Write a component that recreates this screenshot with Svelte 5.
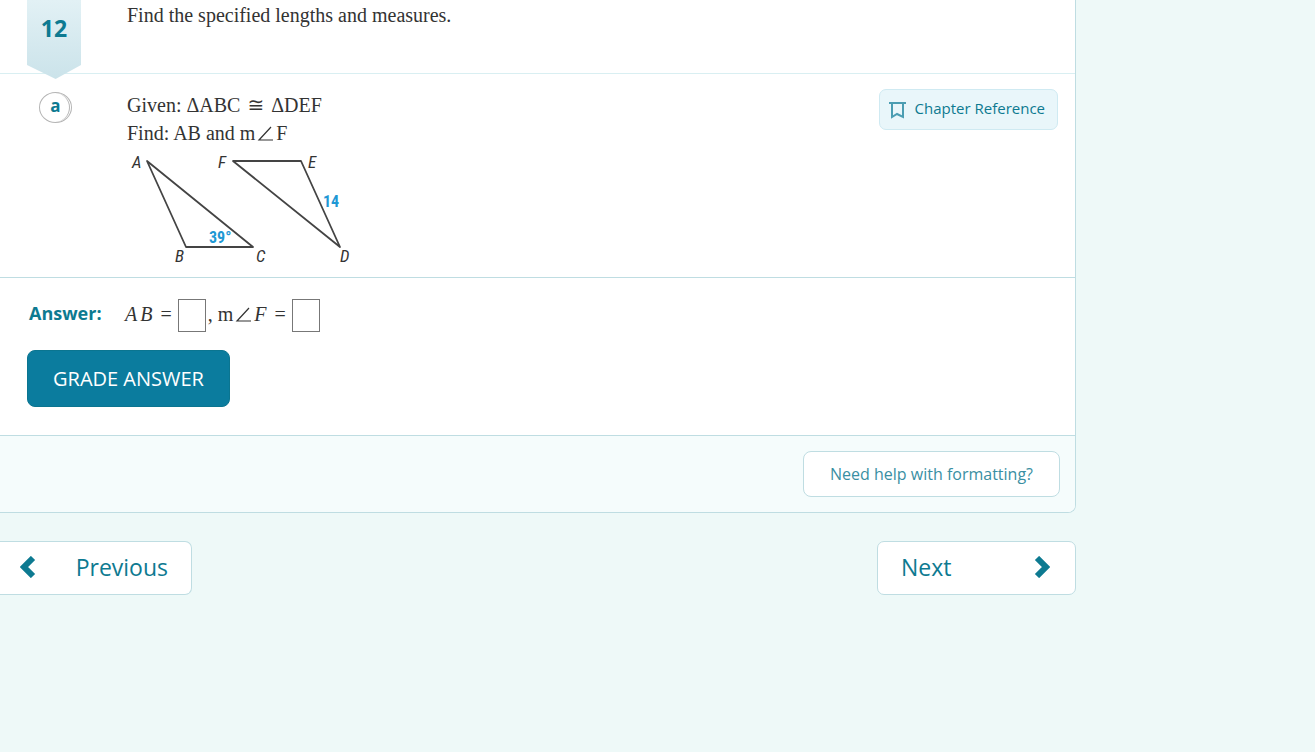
<script lang="ts">
  let ab = $state("");
  let mf = $state("");

  // Vertices of both triangles, in the diagram's own coordinates.
  const triangles = ["20,14 59,100 126,100", "106,14 174,14 213,100"];

  const labels = [
    { text: "A", x: 5, y: 21 },
    { text: "B", x: 48, y: 115 },
    { text: "C", x: 129, y: 115 },
    { text: "F", x: 91, y: 21 },
    { text: "E", x: 181, y: 21 },
    { text: "D", x: 213, y: 115 },
  ];

  const measures = [
    { text: "39°", x: 82, y: 96 },
    { text: "14", x: 196, y: 60 },
  ];
</script>

{#snippet angle()}
  <svg class="angle" viewBox="0 0 17 15" width="17" height="15" role="img" aria-label="angle">
    <path d="M14 1 L2 14 H16" />
  </svg>
{/snippet}

<main>
  <section class="card">
    <header class="row head">
      <div class="ribbon">12</div>
      <p class="prose">Find the specified lengths and measures.</p>
    </header>

    <div class="row part">
      <div class="letter"><span>a</span></div>
      <div class="prose">
        <p>Given: ΔABC <span class="cong">≅</span> ΔDEF</p>
        <p>Find: AB and m{@render angle()}F</p>
        <svg class="diagram" viewBox="0 0 230 125" width="230" height="125" role="img" aria-label="Triangles ABC and DEF">
          {#each triangles as points}
            <polygon {points} />
          {/each}
          {#each labels as l}
            <text class="vertex" x={l.x} y={l.y}>{l.text}</text>
          {/each}
          {#each measures as m}
            <text class="measure" x={m.x} y={m.y}>{m.text}</text>
          {/each}
        </svg>
      </div>
      <button class="chapter">
        <svg viewBox="0 0 17 18" width="17" height="18">
          <path d="M0 2 H17 M3 2 V16 L8 13 L14 16 V2" />
        </svg>
        Chapter Reference
      </button>
    </div>

    <form class="answer" onsubmit={(e) => e.preventDefault()}>
      <div class="fields">
        <strong>Answer:</strong>
        <label for="ab"><i>A</i><i class="factor">B</i><span class="eq">=</span></label>
        <input id="ab" bind:value={ab} autocomplete="off" />
        <label class="next-field" for="mf">, m{@render angle()}<i>F</i><span class="eq">=</span></label>
        <input id="mf" bind:value={mf} autocomplete="off" />
      </div>
      <button class="grade">GRADE ANSWER</button>
    </form>

    <footer>
      <button class="help">Need help with formatting?</button>
    </footer>
  </section>

  <nav>
    <button class="prev">
      <svg viewBox="0 0 16 22" width="16" height="22"><path d="M13 2 L4 11 L13 20" /></svg>
      Previous
    </button>
    <button class="next">
      Next
      <svg viewBox="0 0 16 22" width="16" height="22"><path d="M3 2 L12 11 L3 20" /></svg>
    </button>
  </nav>
</main>

<style>
  :global(body) {
    background: #eef9f8;
  }

  main {
    --teal: #0d7a91;
    --line: #bfdde2;
    margin-right: 239px;
    font-family: "Open Sans", sans-serif;
    color: var(--teal);
  }
  p {
    margin: 0;
  }
  button {
    box-sizing: border-box;
    font-family: inherit;
    color: inherit;
    cursor: pointer;
  }

  .card {
    background: #fff;
    border: solid var(--line);
    border-width: 0 1px 1px 0;
    border-radius: 0 0 8px 0;
    overflow: hidden;
  }

  .row {
    display: flex;
    align-items: flex-start;
  }
  .prose {
    flex: 1;
    font: 20px/28px "Liberation Serif", serif;
    color: #333;
  }

  .head {
    height: 73px;
    border-bottom: 1px solid #d9eff2;
  }
  .head .prose {
    padding-top: 1px;
  }
  .ribbon {
    width: 54px;
    height: 79px;
    box-sizing: border-box;
    margin: 0 46px 0 27px;
    padding-top: 14px;
    background: linear-gradient(#e2f1f5, #cbe3ea);
    clip-path: polygon(0 0, 100% 0, 100% 65px, 53% 100%, 0 65px);
    text-align: center;
    font-size: 23px;
    line-height: 28px;
    font-weight: 700;
  }

  .part {
    padding: 15px 17px 5px 39px;
    border-bottom: 1px solid var(--line);
  }
  .letter {
    width: 33px;
    height: 31px;
    box-sizing: border-box;
    margin: 3px 55px 0 0;
    border: 1px solid #b5b5b5;
    border-radius: 50%;
  }
  .letter span {
    display: block;
    width: 30px;
    height: 29px;
    box-sizing: border-box;
    border-right: 1px solid #b5b5b5;
    border-radius: 50%;
    padding-left: 2px;
    text-align: center;
    font-size: 17px;
    line-height: 26px;
    font-weight: 700;
  }
  .part .prose {
    padding-top: 2px;
  }
  .cong {
    margin: 0 2px;
    font-family: "DejaVu Sans", sans-serif;
  }
  .angle {
    margin: 0 2px;
    fill: none;
    stroke: #333;
    stroke-width: 1.2;
    vertical-align: -1px;
  }

  .diagram {
    display: block;
  }
  .diagram polygon {
    fill: none;
    stroke: #444;
    stroke-width: 1.8;
    stroke-linejoin: round;
  }
  .vertex {
    fill: #333;
    font: italic 400 17px "Roboto Condensed", "Liberation Sans Narrow", sans-serif;
  }
  .measure {
    fill: #1f98d4;
    font: 700 16px "Roboto Condensed", "Liberation Sans Narrow", sans-serif;
  }

  .chapter {
    display: flex;
    align-items: center;
    gap: 9px;
    height: 41px;
    padding: 0 12px 3px 9px;
    border: 1px solid #cfeaf2;
    border-radius: 7px;
    background: #e9f6fa;
    font-size: 15px;
  }
  .chapter svg {
    margin-top: 3px;
    fill: none;
    stroke: #4b9db2;
    stroke-width: 2;
  }

  .answer {
    padding: 21px 27px 28px;
    border-bottom: 1px solid var(--line);
  }
  .fields {
    display: flex;
    align-items: center;
    height: 33px;
    margin-bottom: 18px;
    font: 20px/28px "Liberation Serif", serif;
    color: #333;
  }
  .fields strong {
    width: 98px;
    padding: 0 0 6px 2px;
    box-sizing: border-box;
    font-family: "Open Sans", sans-serif;
    font-size: 18px;
    color: var(--teal);
  }
  .fields label {
    padding-bottom: 4px;
    white-space: nowrap;
  }
  .fields .next-field {
    padding-left: 2px;
  }
  .factor {
    margin-left: 3px;
  }
  .eq {
    margin: 0 6px 0 8px;
  }
  .fields input {
    width: 28px;
    height: 33px;
    box-sizing: border-box;
    padding: 0 4px;
    border: 1px solid #777;
    background: #fff;
    font: inherit;
  }
  .grade {
    height: 57px;
    padding: 0 25px;
    border: 1px solid #0b7590;
    border-radius: 8px;
    background: #0b7c9e;
    color: #fff;
    font-size: 20px;
  }

  footer {
    display: flex;
    justify-content: flex-end;
    padding: 15px;
    background: #f5fcfc;
  }
  .help {
    height: 46px;
    padding: 0 26px;
    border: 1px solid var(--line);
    border-radius: 8px;
    background: #fff;
    color: #3a8fa3;
    font-size: 16px;
  }

  nav {
    display: flex;
    justify-content: space-between;
    padding-top: 28px;
  }
  nav button {
    display: flex;
    align-items: center;
    justify-content: space-between;
    height: 54px;
    padding: 0 23px 2px;
    border: 1px solid var(--line);
    border-radius: 7px;
    background: #fff;
    font-size: 23px;
  }
  nav svg {
    fill: none;
    stroke: var(--teal);
    stroke-width: 6;
  }
  .prev {
    width: 192px;
    padding-left: 20px;
    border-left: none;
    border-radius: 0 7px 7px 0;
  }
  .next {
    width: 199px;
    padding-right: 25px;
  }
</style>
